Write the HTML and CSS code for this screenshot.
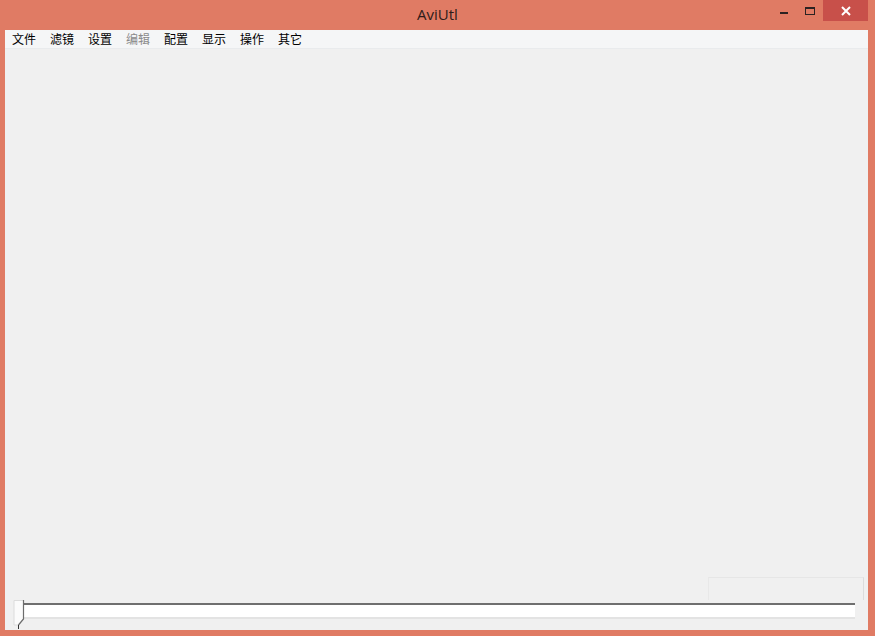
FILE: index.html
```html
<!DOCTYPE html>
<html>
<head>
<meta charset="utf-8">
<link rel="stylesheet" href="styles.css">
</head>
<body>
<div class="window">
  <div class="titlebar">
    <div class="title">AviUtl</div>
    <div class="controls">
      <div class="btn min"><svg width="10" height="10" viewBox="0 0 10 10"><rect x="1" y="6" width="8" height="2" fill="#2b2222"/></svg></div>
      <div class="btn max"><svg width="12" height="10" viewBox="0 0 12 10"><rect x="1.5" y="1.5" width="9" height="7" fill="none" stroke="#2b2222" stroke-width="1"/><rect x="1" y="1" width="10" height="2" fill="#2b2222"/></svg></div>
      <div class="btn close"><svg width="12" height="12" viewBox="0 0 12 12"><path d="M2 2 L10 10 M10 2 L2 10" stroke="#fff" stroke-width="2"/></svg></div>
    </div>
  </div>
  <div class="client">
    <div class="menubar">
      <span class="mi">文件</span>
      <span class="mi">滤镜</span>
      <span class="mi">设置</span>
      <span class="mi disabled">编辑</span>
      <span class="mi">配置</span>
      <span class="mi">显示</span>
      <span class="mi">操作</span>
      <span class="mi">其它</span>
    </div>
    <div class="content">
      <div class="ghostbox"></div>
      <div class="slider">
        <div class="track"></div>
        <div class="thumb">
          <svg width="12" height="27" viewBox="0 0 12 27"><path d="M1 0.5 H10.5 V19 L5 25 H1 Z" fill="#fbfbfb" stroke="#dcdcdc" stroke-width="1"/><path d="M10.5 0 V19 L5.5 25" fill="none" stroke="#6d6d6d" stroke-width="1.2"/></svg>
        </div>
        <div class="tick"></div>
      </div>
    </div>
  </div>
</div>
</body>
</html>
```
FILE: styles.css
```css
html, body {
  margin: 0;
  padding: 0;
}
body {
  width: 875px;
  height: 636px;
  overflow: hidden;
  background: #e07b64;
  font-family: "Noto Sans CJK SC", "Open Sans", sans-serif;
}
.window {
  width: 875px;
  height: 636px;
  background: #e07b64;
  display: flex;
  flex-direction: column;
  box-sizing: border-box;
  padding: 0 7px 6px 5px;
}
.titlebar {
  height: 30px;
  position: relative;
  flex: none;
}
.title {
  text-align: center;
  font-family: "Open Sans", "Liberation Sans", sans-serif;
  font-size: 15px;
  line-height: 28px;
  color: #2e1c1a;
  padding-left: 2px;
}
.controls {
  position: absolute;
  right: 0;
  top: 0;
  display: flex;
}
.btn {
  height: 21px;
  display: flex;
  align-items: center;
  justify-content: center;
}
.btn.min { width: 26px; }
.btn.max { width: 26px; }
.btn.close {
  width: 45px;
  background: #c8504a;
}
.client {
  flex: 1;
  background: #f0f0f0;
  display: flex;
  flex-direction: column;
}
.menubar {
  height: 18px;
  background: #f5f6f7;
  border-bottom: 1px solid #e9ebed;
  display: flex;
  padding-left: 7px;
  flex: none;
}
.mi {
  font-size: 12px;
  line-height: 18px;
  color: #000;
  margin-right: 14px;
}
.mi.disabled {
  color: #8a8a8a;
}
.content {
  flex: 1;
  position: relative;
}
.ghostbox {
  position: absolute;
  left: 703px;
  top: 528px;
  width: 154px;
  height: 22px;
  border-top: 1px solid #e6e6e6;
  border-right: 1px solid #dcdcdc;
  border-left: 1px solid #e8e8e8;
}
.slider {
  position: absolute;
  left: 8px;
  top: 551px;
  width: 842px;
  height: 30px;
}
.track {
  position: absolute;
  left: 9px;
  top: 3px;
  width: 833px;
  height: 12px;
  background: #ffffff;
  border-top: 2px solid #6f6f6f;
  border-bottom: 2px solid #e3e3e3;
}
.thumb {
  position: absolute;
  left: 0;
  top: 0;
}
.thumb svg { display: block; }
.tick {
  position: absolute;
  left: 5px;
  top: 25px;
  width: 1px;
  height: 4px;
  background: #333;
}
```
